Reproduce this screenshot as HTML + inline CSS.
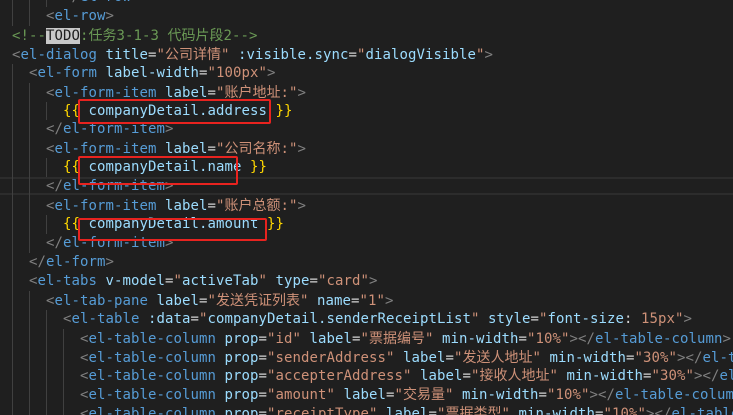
<!DOCTYPE html>
<html><head><meta charset="utf-8"><style>
html,body{margin:0;padding:0;background:#1f1f1f;width:733px;height:415px;overflow:hidden;position:relative}
#wrap{position:absolute;left:0;top:0;width:733px;height:415px;overflow:hidden}
#ed{position:absolute;left:12px;top:-12px;width:721px;font-family:"DejaVu Sans Mono","Liberation Mono","Noto Sans CJK SC",monospace;font-size:14px;letter-spacing:0.07px;line-height:18.93px;color:#d4d4d4}
.l{height:18.93px;position:relative;white-space:pre;overflow:hidden}
i{display:inline-block;width:17px;height:18.93px;vertical-align:top;box-sizing:border-box;border-left:1px solid #404040;font-style:normal}
.b{color:#808080}.t{color:#569cd6}.a{color:#9cdcfe}.s{color:#ce9178}.y{color:#ffd700}.c{color:#6a9955}
.k{font-family:"Noto Sans CJK SC",sans-serif;letter-spacing:0}
.todo{background:#c8c8c8;color:#1e1e1e}
.box{position:absolute;border:2px solid #e8231f;border-radius:2px;box-sizing:border-box}
.hl{position:absolute;left:0;width:733px;top:177px;height:18px;border-top:2px solid #2c2c2c;border-bottom:2px solid #2c2c2c;box-sizing:border-box}
</style></head><body><div id="wrap">
<div class="hl"></div>
<div id="ed"><div class="l"><i></i><i></i><i></i><span class="b">&lt;/</span><span class="t">el-row</span><span class="b">&gt;</span></div><div class="l"><i></i><i></i><span class="b">&lt;</span><span class="t">el-row</span><span class="b">&gt;</span></div><div class="l"><span class="c">&lt;!--<span class="todo">TODO</span>:<span class="k">任务</span>3-1-3 <span class="k">代码片段</span>2--&gt;</span></div><div class="l"><span class="b">&lt;</span><span class="t">el-dialog</span> <span class="a">title</span>=<span class="s">"<span class="k">公司详情</span>"</span> <span class="a">:visible.sync</span>=<span class="s">"</span><span class="a">dialogVisible</span><span class="s">"</span><span class="b">&gt;</span></div><div class="l"><i></i><span class="b">&lt;</span><span class="t">el-form</span> <span class="a">label-width</span>=<span class="s">"100px"</span><span class="b">&gt;</span></div><div class="l"><i></i><i></i><span class="b">&lt;</span><span class="t">el-form-item</span> <span class="a">label</span>=<span class="s">"<span class="k">账户地址</span>:"</span><span class="b">&gt;</span></div><div class="l"><i></i><i></i><i></i><span class="y">{{</span> <span class="a">companyDetail.address</span> <span class="y">}}</span></div><div class="l"><i></i><i></i><span class="b">&lt;/</span><span class="t">el-form-item</span><span class="b">&gt;</span></div><div class="l"><i></i><i></i><span class="b">&lt;</span><span class="t">el-form-item</span> <span class="a">label</span>=<span class="s">"<span class="k">公司名称</span>:"</span><span class="b">&gt;</span></div><div class="l"><i></i><i></i><i></i><span class="y">{{</span> <span class="a">companyDetail.name</span> <span class="y">}}</span></div><div class="l"><i></i><i></i><span class="b">&lt;/</span><span class="t">el-form-item</span><span class="b">&gt;</span></div><div class="l"><i></i><i></i><span class="b">&lt;</span><span class="t">el-form-item</span> <span class="a">label</span>=<span class="s">"<span class="k">账户总额</span>:"</span><span class="b">&gt;</span></div><div class="l"><i></i><i></i><i></i><span class="y">{{</span> <span class="a">companyDetail.amount</span> <span class="y">}}</span></div><div class="l"><i></i><i></i><span class="b">&lt;/</span><span class="t">el-form-item</span><span class="b">&gt;</span></div><div class="l"><i></i><span class="b">&lt;/</span><span class="t">el-form</span><span class="b">&gt;</span></div><div class="l"><i></i><span class="b">&lt;</span><span class="t">el-tabs</span> <span class="a">v-model</span>=<span class="s">"</span><span class="a">activeTab</span><span class="s">"</span> <span class="a">type</span>=<span class="s">"card"</span><span class="b">&gt;</span></div><div class="l"><i></i><i></i><span class="b">&lt;</span><span class="t">el-tab-pane</span> <span class="a">label</span>=<span class="s">"<span class="k">发送凭证列表</span>"</span> <span class="a">name</span>=<span class="s">"1"</span><span class="b">&gt;</span></div><div class="l"><i></i><i></i><i></i><span class="b">&lt;</span><span class="t">el-table</span> <span class="a">:data</span>=<span class="s">"</span><span class="a">companyDetail.senderReceiptList</span><span class="s">"</span> <span class="a">style</span>=<span class="s">"</span><span class="a">font-size</span>: <span class="s">15px</span><span class="s">"</span><span class="b">&gt;</span></div><div class="l"><i></i><i></i><i></i><i></i><span class="b">&lt;</span><span class="t">el-table-column</span> <span class="a">prop</span>=<span class="s">"id"</span> <span class="a">label</span>=<span class="s">"<span class="k">票据编号</span>"</span> <span class="a">min-width</span>=<span class="s">"10%"</span><span class="b">&gt;&lt;/</span><span class="t">el-table-column</span><span class="b">&gt;</span></div><div class="l"><i></i><i></i><i></i><i></i><span class="b">&lt;</span><span class="t">el-table-column</span> <span class="a">prop</span>=<span class="s">"senderAddress"</span> <span class="a">label</span>=<span class="s">"<span class="k">发送人地址</span>"</span> <span class="a">min-width</span>=<span class="s">"30%"</span><span class="b">&gt;&lt;/</span><span class="t">el-table-column</span><span class="b">&gt;</span></div><div class="l"><i></i><i></i><i></i><i></i><span class="b">&lt;</span><span class="t">el-table-column</span> <span class="a">prop</span>=<span class="s">"accepterAddress"</span> <span class="a">label</span>=<span class="s">"<span class="k">接收人地址</span>"</span> <span class="a">min-width</span>=<span class="s">"30%"</span><span class="b">&gt;&lt;/</span><span class="t">el-table-column</span><span class="b">&gt;</span></div><div class="l"><i></i><i></i><i></i><i></i><span class="b">&lt;</span><span class="t">el-table-column</span> <span class="a">prop</span>=<span class="s">"amount"</span> <span class="a">label</span>=<span class="s">"<span class="k">交易量</span>"</span> <span class="a">min-width</span>=<span class="s">"10%"</span><span class="b">&gt;&lt;/</span><span class="t">el-table-column</span><span class="b">&gt;</span></div><div class="l"><i></i><i></i><i></i><i></i><span class="b">&lt;</span><span class="t">el-table-column</span> <span class="a">prop</span>=<span class="s">"receiptType"</span> <span class="a">label</span>=<span class="s">"<span class="k">票据类型</span>"</span> <span class="a">min-width</span>=<span class="s">"10%"</span><span class="b">&gt;&lt;/</span><span class="t">el-table-column</span><span class="b">&gt;</span></div></div>
<div class="box" style="left:78px;top:99px;width:193px;height:25px"></div>
<div class="box" style="left:78px;top:156px;width:160px;height:29px"></div>
<div class="box" style="left:78px;top:218px;width:189px;height:23px"></div>
</div></body></html>
